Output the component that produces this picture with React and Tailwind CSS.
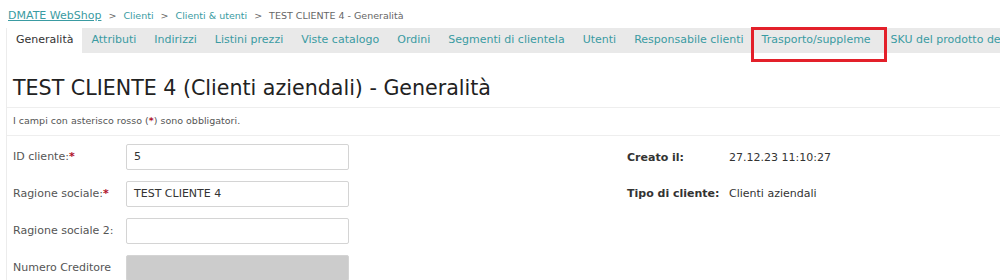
import React from "react";

const tabs = [
  "Generalità",
  "Attributi",
  "Indirizzi",
  "Listini prezzi",
  "Viste catalogo",
  "Ordini",
  "Segmenti di clientela",
  "Utenti",
  "Responsabile clienti",
  "Trasporto/suppleme",
  "SKU del prodotto del cliente",
];

const Field = ({ label, required, value, disabled }) => (
  <div className="flex items-center h-[26px]">
    <div className="w-[113px] shrink-0 text-[11px] text-[#555]">
      {label}
      {required && <span className="text-[#b0102a] font-bold">*</span>}
    </div>
    <div
      className={
        "w-[223px] shrink-0 h-[26px] border border-[#d4d4d4] rounded-[2px] px-[7px] flex items-center text-[11px] text-[#333] " +
        (disabled ? "bg-[#cccccc]" : "bg-white")
      }
    >
      {value}
    </div>
  </div>
);

export default function App() {
  return (
    <div className="w-[1000px] h-[280px] overflow-hidden bg-white font-['DejaVu_Sans',sans-serif]">
      <div className="px-2 pt-[8px] h-[28px] text-[9.5px] text-[#666] whitespace-nowrap">
        <span className="text-[#3a9ba2] underline text-[11px]">DMATE WebShop</span>
        <span className="mx-[7px]">&gt;</span>
        <span className="text-[#3a9ba2]">Clienti</span>
        <span className="mx-[7px]">&gt;</span>
        <span className="text-[#3a9ba2]">Clienti &amp; utenti</span>
        <span className="mx-[7px]">&gt;</span>
        <span>TEST CLIENTE 4 - Generalità</span>
      </div>

      <div className="ml-[6px] border-l border-[#ececec] min-h-[260px]">
        <div className="flex bg-[#e9e9e9] h-[25px] whitespace-nowrap overflow-hidden">
          {tabs.map((t, i) => (
            <div
              key={i}
              className={
                "shrink-0 h-[25px] flex items-center px-[9px] text-[11px] " +
                (i === 0 ? "bg-white text-[#333] " : "text-[#3a9ba2] ") +
                (i === 9 ? "w-[129px] overflow-hidden" : "")
              }
            >
              {t}
            </div>
          ))}
        </div>

        <div className="relative">
          <div className="absolute left-[744px] top-[-26px] w-[136px] h-[35px] border-[3px] border-[#e3202a]"></div>
        </div>

        <h1 className="px-[6px] pt-[22px] pb-[6px] text-[20.6px] leading-[26px] text-[#222]">
          TEST CLIENTE 4 (Clienti aziendali) - Generalità
        </h1>
        <div className="border-t border-[#eeeeee]"></div>
        <div className="px-[6px] h-[27px] flex items-center text-[9.5px] text-[#555]">
          <span>
            I campi con asterisco rosso (<span className="text-[#b0102a] font-bold">*</span>) sono obbligatori.
          </span>
        </div>
        <div className="border-t border-[#eeeeee]"></div>

        <div className="flex px-[6px] pt-[8px]">
          <div className="flex flex-col gap-[11px] w-[614px] shrink-0">
            <Field label="ID cliente:" required value="5" />
            <Field label="Ragione sociale:" required value="TEST CLIENTE 4" />
            <Field label="Ragione sociale 2:" value="" />
            <Field label="Numero Creditore" value="" disabled />
          </div>
          <div className="flex flex-col gap-[10px] text-[11px] text-[#333] pt-[1px]">
            <div className="flex h-[26px] items-center">
              <div className="w-[102px] shrink-0 font-bold">Creato il:</div>
              <div>27.12.23 11:10:27</div>
            </div>
            <div className="flex h-[26px] items-center">
              <div className="w-[102px] shrink-0 font-bold">Tipo di cliente:</div>
              <div>Clienti aziendali</div>
            </div>
          </div>
        </div>
      </div>
    </div>
  );
}
